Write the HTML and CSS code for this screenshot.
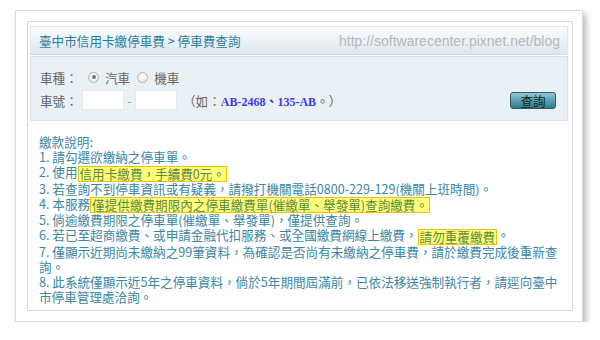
FILE: index.html
```html
<!DOCTYPE html>
<html lang="zh-Hant">
<head>
<meta charset="utf-8">
<link rel="stylesheet" href="styles.css">
</head>
<body>
<div class="card">
  <div class="frame">
    <div class="header">
      <span class="title">臺中市信用卡繳停車費 &gt; 停車費查詢</span>
      <span class="wm">http://softwarecenter.pixnet.net/blog</span>
    </div>
    <div class="form">
      <div class="row">
        <span class="label">車種：</span>
        <span class="radio checked"></span><span class="opt">汽車</span>
        <span class="radio"></span><span class="opt">機車</span>
      </div>
      <div class="row row2">
        <span class="label">車號：</span>
        <span class="input"></span>
        <span class="dash">-</span>
        <span class="input"></span>
        <span class="hint">（如：<b class="ex">AB-2468、135-AB</b>。）</span>
        <button class="btn">查詢</button>
      </div>
    </div>
    <div class="notes">
      <div>繳款說明:</div>
      <div>1. 請勾選欲繳納之停車單。</div>
      <div>2. 使用<span class="hl">信用卡繳費，手續費0元。</span></div>
      <div>3. 若查詢不到停車資訊或有疑義，請撥打機關電話0800-229-129(機關上班時間)。</div>
      <div>4. 本服務<span class="hl">僅提供繳費期限內之停車繳費單(催繳單、舉發單)查詢繳費。</span></div>
      <div>5. 倘逾繳費期限之停車單(催繳單、舉發單)，僅提供查詢。</div>
      <div>6. 若已至超商繳費、或申請金融代扣服務、或全國繳費網線上繳費，<span class="hl">請勿重覆繳費</span>。</div>
      <div>7. 僅顯示近期尚未繳納之99筆資料，為確認是否尚有未繳納之停車費，請於繳費完成後重新查詢。</div>
      <div>8. 此系統僅顯示近5年之停車資料，倘於5年期間屆滿前，已依法移送強制執行者，請逕向臺中市停車管理處洽詢。</div>
    </div>
  </div>
</div>
</body>
</html>
```
FILE: styles.css
```css
* { box-sizing: border-box; }
body {
  margin: 0;
  background: #fff;
  font-family: "Noto Sans CJK TC", "Noto Sans", sans-serif;
  font-size: 12.6px;
}
.card {
  margin: 10px 0 0 15px;
  width: 568px;
  height: 312px;
  border: 1px solid #dcdcdc;
  background: #fff;
  padding: 10px 9px 10px 11px;
  box-shadow: 3px 4px 6px rgba(0,0,0,0.28);
}
.frame {
  width: 546px;
  height: 290px;
  border: 1px solid #d8d8d8;
  padding: 4px 4px 0 2px;
}
.header {
  height: 29px;
  display: flex;
  align-items: center;
  justify-content: space-between;
  padding: 0 7px 0 8px;
  background: linear-gradient(#fbfdfe, #dbe7f0);
  border: 1px solid #dde7ee;
  border-bottom-color: #cfdde7;
}
.title { color: #2c7c98; font-size: 12.6px; }
.wm {
  color: #b8b8b8;
  font-family: "Liberation Sans", Arial, sans-serif;
  font-size: 14px;
}
.form {
  margin-top: 1px;
  height: 65px;
  background: #e9f1f4;
  border: 1px solid #d6e2e8;
  padding: 10px 11px 0 9px;
  color: #666;
}
.row {
  height: 20px;
  display: flex;
  align-items: center;
}
.row2 { margin-top: 3px; }
.label { width: 48px; }
.radio {
  width: 11px;
  height: 11px;
  border-radius: 50%;
  border: 1px solid #b3b3b3;
  background: radial-gradient(circle at 50% 40%, #fff, #e2e2e2);
  margin-right: 6px;
  position: relative;
}
.radio.checked::after {
  content: "";
  position: absolute;
  left: 2.5px;
  top: 2.5px;
  width: 4px;
  height: 4px;
  border-radius: 50%;
  background: #777;
}
.opt { margin-right: 7px; }
.input {
  width: 42px;
  height: 20px;
  background: #fff;
  border: 1px solid #e3eaee;
}
.row2 .label { width: 42px; }
.dash { width: 11px; text-align: center; color: #999; }
.hint { margin-left: 6px; }
.ex {
  color: #3a3af0;
  font-family: "Liberation Serif", "Noto Sans CJK TC", serif;
  font-size: 12px;
  font-weight: bold;
}
.btn {
  margin-left: auto;
  width: 46px;
  height: 17px;
  padding: 0;
  border: 1px solid #2b5c67;
  border-radius: 3px;
  background: linear-gradient(#93c8d2, #5aa0ae 50%, #337b8b);
  color: #13262c;
  font-family: "Noto Sans CJK TC", sans-serif;
  font-size: 12.6px;
  line-height: 15px;
}
.notes {
  width: 535px;
  padding: 13px 0 0 9px;
  color: #3b86a3;
  line-height: 15px;
}
.hl {
  display: inline-block;
  line-height: 14px;
  margin: -1px 0;
  background: #ffff7c;
  border: 1px solid #f1c200;
  color: #5b8a3e;
  padding: 0 1px;
  vertical-align: middle;
}
```
